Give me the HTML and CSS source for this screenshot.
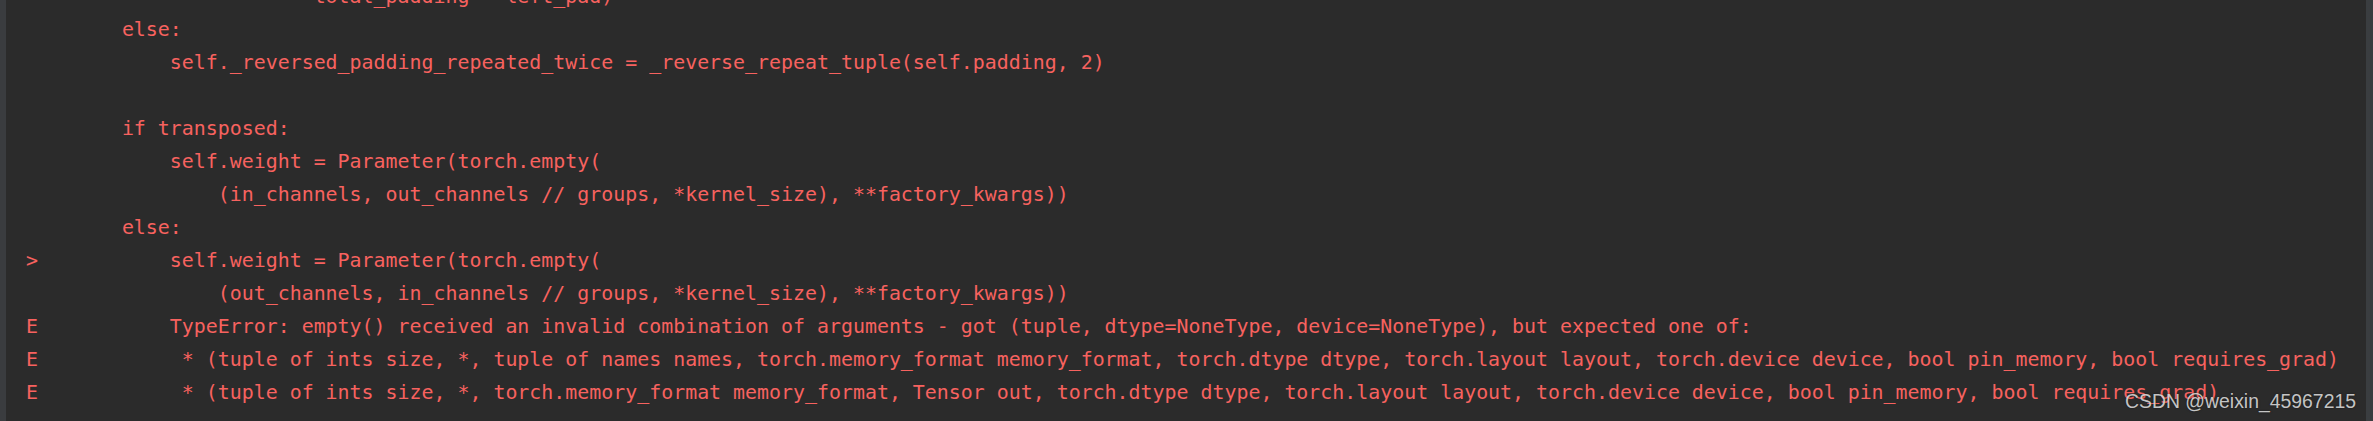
FILE: index.html
```html
<!DOCTYPE html>
<html lang="en">
<head>
<meta charset="utf-8">
<title>Test output</title>
<link rel="stylesheet" href="styles.css">
</head>
<body>
<div class="frame">
  <div class="gutter-left"></div>
  <div class="console">
    <div class="line">                        total_padding - left_pad)</div>
    <div class="line">        else:</div>
    <div class="line">            self._reversed_padding_repeated_twice = _reverse_repeat_tuple(self.padding, 2)</div>
    <div class="line"> </div>
    <div class="line">        if transposed:</div>
    <div class="line">            self.weight = Parameter(torch.empty(</div>
    <div class="line">                (in_channels, out_channels // groups, *kernel_size), **factory_kwargs))</div>
    <div class="line">        else:</div>
    <div class="line">&gt;           self.weight = Parameter(torch.empty(</div>
    <div class="line">                (out_channels, in_channels // groups, *kernel_size), **factory_kwargs))</div>
    <div class="line">E           TypeError: empty() received an invalid combination of arguments - got (tuple, dtype=NoneType, device=NoneType), but expected one of:</div>
    <div class="line">E            * (tuple of ints size, *, tuple of names names, torch.memory_format memory_format, torch.dtype dtype, torch.layout layout, torch.device device, bool pin_memory, bool requires_grad)</div>
    <div class="line">E            * (tuple of ints size, *, torch.memory_format memory_format, Tensor out, torch.dtype dtype, torch.layout layout, torch.device device, bool pin_memory, bool requires_grad)</div>
  </div>
  <div class="gutter-right"></div>
  <div class="watermark">CSDN @weixin_45967215</div>
</div>
</body>
</html>
```

FILE: styles.css
```css
html, body {
  margin: 0;
  padding: 0;
  background: #2b2b2b;
}

.frame {
  position: relative;
  display: flex;
  width: 2373px;
  height: 421px;
  overflow: hidden;
  background: #2b2b2b;
}

.gutter-left {
  flex: 0 0 6px;
  background: #3a3c3f;
}

.gutter-right {
  flex: 0 0 7px;
  background: #3a3d40;
}

.console {
  flex: 1 1 auto;
  min-width: 0;
  margin-top: -20px;
  padding-left: 20px;
  font-family: "DejaVu Sans Mono", monospace;
  font-size: 19.92px;
  line-height: 33px;
  color: #f7625f;
}

.line {
  white-space: pre;
  height: 33px;
}

.watermark {
  position: absolute;
  top: 390px;
  right: 17px;
  font-family: "Liberation Sans", Arial, sans-serif;
  font-size: 19.4px;
  line-height: 22px;
  color: rgba(228, 228, 228, 0.85);
  text-shadow: 0 0 2px rgba(0, 0, 0, 0.5);
  white-space: nowrap;
}
```
